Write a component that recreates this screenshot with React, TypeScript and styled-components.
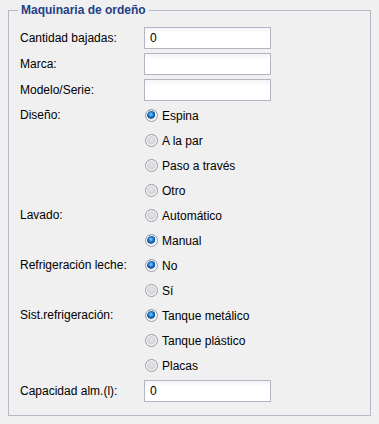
import React from 'react';
import styled, { createGlobalStyle } from 'styled-components';

const GlobalStyle = createGlobalStyle`
  html, body {
    margin: 0;
    padding: 0;
    background: #f0f0f0;
  }
  body {
    font-family: "Liberation Sans", Arial, sans-serif;
    font-size: 12px;
    color: #000;
  }
`;

const Page = styled.div`
  padding: 3px 8px 0 8px;
`;

const Fieldset = styled.fieldset`
  margin: 0;
  border: 1px solid #b7b7c5;
  padding: 0 11px 11px 11px;
  min-width: 0;
`;

const Legend = styled.legend`
  margin-left: -2px;
  padding: 0 3px;
  font-weight: bold;
  font-size: 12px;
  line-height: 14px;
  color: #1f3f86;
`;

const Form = styled.div`
  padding-top: 8px;
  display: flex;
  flex-direction: column;
`;

const Row = styled.div`
  display: grid;
  grid-template-columns: 124px 1fr;
`;

const Label = styled.div<{ $h: number }>`
  line-height: ${p => p.$h}px;
  height: ${p => p.$h}px;
  white-space: nowrap;
`;

const Controls = styled.div`
  display: flex;
  flex-direction: column;
`;

const TextInput = styled.input`
  box-sizing: border-box;
  width: 127px;
  height: 22px;
  margin: 2px 0;
  padding: 0 5px;
  border: 1px solid #b4b4c2;
  background: linear-gradient(#f3f4f6, #ffffff 6px);
  font-family: "Liberation Sans", Arial, sans-serif;
  font-size: 12px;
  color: #000;
  outline: none;
`;

const RadioLine = styled.label`
  display: flex;
  align-items: center;
  height: 25px;
  cursor: default;
`;

const RadioDot = styled.span<{ $on: boolean }>`
  box-sizing: border-box;
  width: 13px;
  height: 13px;
  margin-left: 1px;
  margin-right: 4px;
  border-radius: 50%;
  border: 1px solid #9a9aa4;
  background: ${p =>
    p.$on
      ? 'radial-gradient(circle at 45% 40%, #8fd0ff 0, #2a86d6 2px, #0d4f9a 4px, #e9e9ec 4.6px, #f7f7f9 100%)'
      : 'radial-gradient(circle at 50% 40%, #e6e6ea 0, #d4d4d9 4px, #f4f4f6 100%)'};
  box-shadow: inset 0 0 0 1px #fbfbfc;
`;

interface TextFieldProps {
  label: string;
  value?: string;
}

const TextField: React.FC<TextFieldProps> = ({ label, value = '' }) => (
  <Row>
    <Label $h={26}>{label}</Label>
    <Controls>
      <TextInput defaultValue={value} />
    </Controls>
  </Row>
);

interface RadioFieldProps {
  label: string;
  options: string[];
  selected: number;
}

const RadioField: React.FC<RadioFieldProps> = ({ label, options, selected }) => (
  <Row>
    <Label $h={25}>{label}</Label>
    <Controls>
      {options.map((o, i) => (
        <RadioLine key={o}>
          <RadioDot $on={i === selected} />
          {o}
        </RadioLine>
      ))}
    </Controls>
  </Row>
);

const App: React.FC = () => {
  return (
    <Page>
      <GlobalStyle />
      <Fieldset>
        <Legend>Maquinaria de ordeño</Legend>
        <Form>
          <TextField label="Cantidad bajadas:" value="0" />
          <TextField label="Marca:" />
          <TextField label="Modelo/Serie:" />
          <RadioField
            label="Diseño:"
            options={['Espina', 'A la par', 'Paso a través', 'Otro']}
            selected={0}
          />
          <RadioField label="Lavado:" options={['Automático', 'Manual']} selected={1} />
          <RadioField label="Refrigeración leche:" options={['No', 'Sí']} selected={0} />
          <RadioField
            label="Sist.refrigeración:"
            options={['Tanque metálico', 'Tanque plástico', 'Placas']}
            selected={0}
          />
          <TextField label="Capacidad alm.(l):" value="0" />
        </Form>
      </Fieldset>
    </Page>
  );
};

export default App;
